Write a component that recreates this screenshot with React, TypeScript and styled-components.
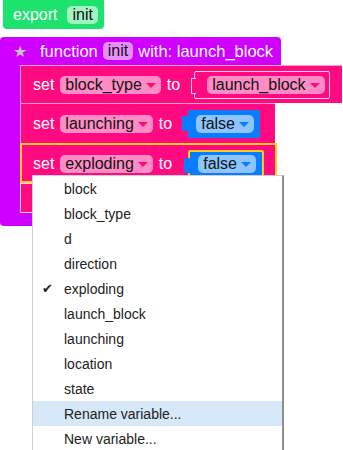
import React from 'react';
import styled, { createGlobalStyle } from 'styled-components';

const GlobalStyle = createGlobalStyle`
  html, body {
    margin: 0;
    padding: 0;
    background: #ffffff;
    font-family: 'Liberation Sans', Arial, sans-serif;
    overflow: hidden;
  }
`;

const PINK = '#ff0a80';
const BLUE = '#0a7cff';
const PURPLE = '#cf00ff';

const Page = styled.div`
  position: relative;
  width: 343px;
  height: 450px;
  display: flex;
  flex-direction: column;
  align-items: flex-start;
`;

const ExportBlock = styled.div`
  margin-left: 3px;
  height: 29px;
  padding: 0 6px 0 10px;
  background: #1de26e;
  border-radius: 0 0 4px 4px;
  display: flex;
  align-items: center;
  gap: 10px;
  color: #fff;
  font-size: 16px;
`;

const Pill = styled.span<{ bg: string }>`
  display: inline-flex;
  align-items: center;
  gap: 4px;
  height: 18px;
  padding: 0 5px;
  border-radius: 5px;
  background: ${(p) => p.bg};
  color: #111;
  font-size: 16px;
  white-space: nowrap;
`;

const Arrow = styled.span<{ tint: string }>`
  width: 0;
  height: 0;
  border-left: 5px solid transparent;
  border-right: 5px solid transparent;
  border-top: 5px solid ${(p) => p.tint};
  margin-top: 2px;
`;

const FunctionBlock = styled.div`
  margin-top: 8px;
  display: flex;
  flex-direction: column;
  align-items: flex-start;
`;

const FunctionHeader = styled.div`
  width: 281px;
  height: 28px;
  box-sizing: border-box;
  padding-left: 13px;
  background: ${PURPLE};
  border-radius: 4px 4px 0 0;
  display: flex;
  align-items: center;
  gap: 5px;
  color: #fff;
  font-size: 16.5px;
  white-space: nowrap;
`;

const Star = styled.span`
  color: #c4c4c4;
  font-size: 16px;
  width: 22px;
`;

const FunctionBody = styled.div`
  display: flex;
  align-items: stretch;
`;

const Rail = styled.div`
  width: 20px;
  background: ${PURPLE};
`;

const Statements = styled.div`
  display: flex;
  flex-direction: column;
  align-items: flex-start;
`;

const FunctionFooter = styled.div`
  width: 160px;
  height: 13px;
  background: ${PURPLE};
  border-radius: 0 0 4px 4px;
`;

const SetBlock = styled.div<{ w: number; h: number; selected?: boolean }>`
  width: ${(p) => p.w}px;
  height: ${(p) => p.h}px;
  box-sizing: border-box;
  background: ${PINK};
  border-top: 1px solid #ff9cc8;
  border-left: 1px solid #ff9cc8;
  ${(p) => (p.selected ? 'outline: 2px solid #ffcf1a; outline-offset: -2px;' : '')}
  padding-left: 12px;
  display: flex;
  align-items: center;
  gap: 6px;
  color: #fff;
  font-size: 16px;
  white-space: nowrap;
`;

const EmptyBlock = styled.div`
  width: 240px;
  height: 30px;
  box-sizing: border-box;
  background: ${PINK};
  border: 1px solid #ffd6e8;
`;

const Word = styled.span`
  color: #fff;
`;

const ValueSlot = styled.div<{ offset: number }>`
  margin-left: ${(p) => p.offset}px;
  display: flex;
`;

const GetterBlock = styled.div`
  position: relative;
  height: 28px;
  box-sizing: border-box;
  padding: 0 4px 0 12px;
  border: 1px solid #ffd0e4;
  border-radius: 2px;
  display: flex;
  align-items: center;

  &::before {
    content: '';
    position: absolute;
    left: -4px;
    top: 6px;
    width: 4px;
    height: 14px;
    border: 1px solid #ffd0e4;
    border-right: none;
    background: ${PINK};
  }
`;

const BoolBlock = styled.div<{ selected?: boolean }>`
  position: relative;
  height: 28px;
  box-sizing: border-box;
  padding: 0 6px 0 8px;
  background: ${BLUE};
  border-radius: 2px;
  ${(p) => (p.selected ? 'border: 2px solid #ffcf1a;' : '')}
  display: flex;
  align-items: center;

  &::before {
    content: '';
    position: absolute;
    left: -6px;
    top: 6px;
    width: 6px;
    height: 15px;
    background: ${BLUE};
    border-radius: 2px 0 0 2px;
  }
`;

const Menu = styled.div`
  position: absolute;
  left: 32px;
  top: 175px;
  width: 252px;
  box-sizing: border-box;
  background: #fff;
  border: 1px solid #cfcfcf;
  border-right: 2px solid #8e8e8e;
  border-bottom: 2px solid #8e8e8e;
  display: flex;
  flex-direction: column;
`;

const MenuItem = styled.div<{ active?: boolean }>`
  height: 25px;
  display: flex;
  align-items: center;
  padding-left: 9px;
  background: ${(p) => (p.active ? '#d6e8f8' : 'transparent')};
  color: #222;
  font-size: 14px;
`;

const Check = styled.span`
  width: 22px;
  font-size: 13px;
  color: #222;
`;

const variables = ['block', 'block_type', 'd', 'direction', 'exploding', 'launch_block', 'launching', 'location', 'state'];

export default function App() {
  return (
    <Page>
      <GlobalStyle />
      <ExportBlock>
        export
        <Pill bg="#a4f3c3">init</Pill>
      </ExportBlock>

      <FunctionBlock>
        <FunctionHeader>
          <Star>★</Star>
          function
          <Pill bg="#e88fff">init</Pill>
          with: launch_block
        </FunctionHeader>
        <FunctionBody>
          <Rail />
          <Statements>
            <SetBlock w={322} h={38}>
              <Word>set</Word>
              <Pill bg="#ff8cc5">
                block_type
                <Arrow tint={PINK} />
              </Pill>
              <Word>to</Word>
              <ValueSlot offset={8}>
                <GetterBlock>
                  <Pill bg="#ff8cc5">
                    launch_block
                    <Arrow tint={PINK} />
                  </Pill>
                </GetterBlock>
              </ValueSlot>
            </SetBlock>
            <SetBlock w={255} h={40}>
              <Word>set</Word>
              <Pill bg="#ff8cc5">
                launching
                <Arrow tint={PINK} />
              </Pill>
              <Word>to</Word>
              <ValueSlot offset={10}>
                <BoolBlock>
                  <Pill bg="#8cc5ff">
                    false
                    <Arrow tint={BLUE} />
                  </Pill>
                </BoolBlock>
              </ValueSlot>
            </SetBlock>
            <SetBlock w={257} h={40} selected>
              <Word>set</Word>
              <Pill bg="#ff8cc5">
                exploding
                <Arrow tint={PINK} />
              </Pill>
              <Word>to</Word>
              <ValueSlot offset={10}>
                <BoolBlock selected>
                  <Pill bg="#8cc5ff">
                    false
                    <Arrow tint={BLUE} />
                  </Pill>
                </BoolBlock>
              </ValueSlot>
            </SetBlock>
            <EmptyBlock />
          </Statements>
        </FunctionBody>
        <FunctionFooter />
      </FunctionBlock>

      <Menu>
        {variables.map((name) => (
          <MenuItem key={name}>
            <Check>{name === 'exploding' ? '✔' : ''}</Check>
            {name}
          </MenuItem>
        ))}
        <MenuItem active>
          <Check />
          Rename variable...
        </MenuItem>
        <MenuItem>
          <Check />
          New variable...
        </MenuItem>
      </Menu>
    </Page>
  );
}
